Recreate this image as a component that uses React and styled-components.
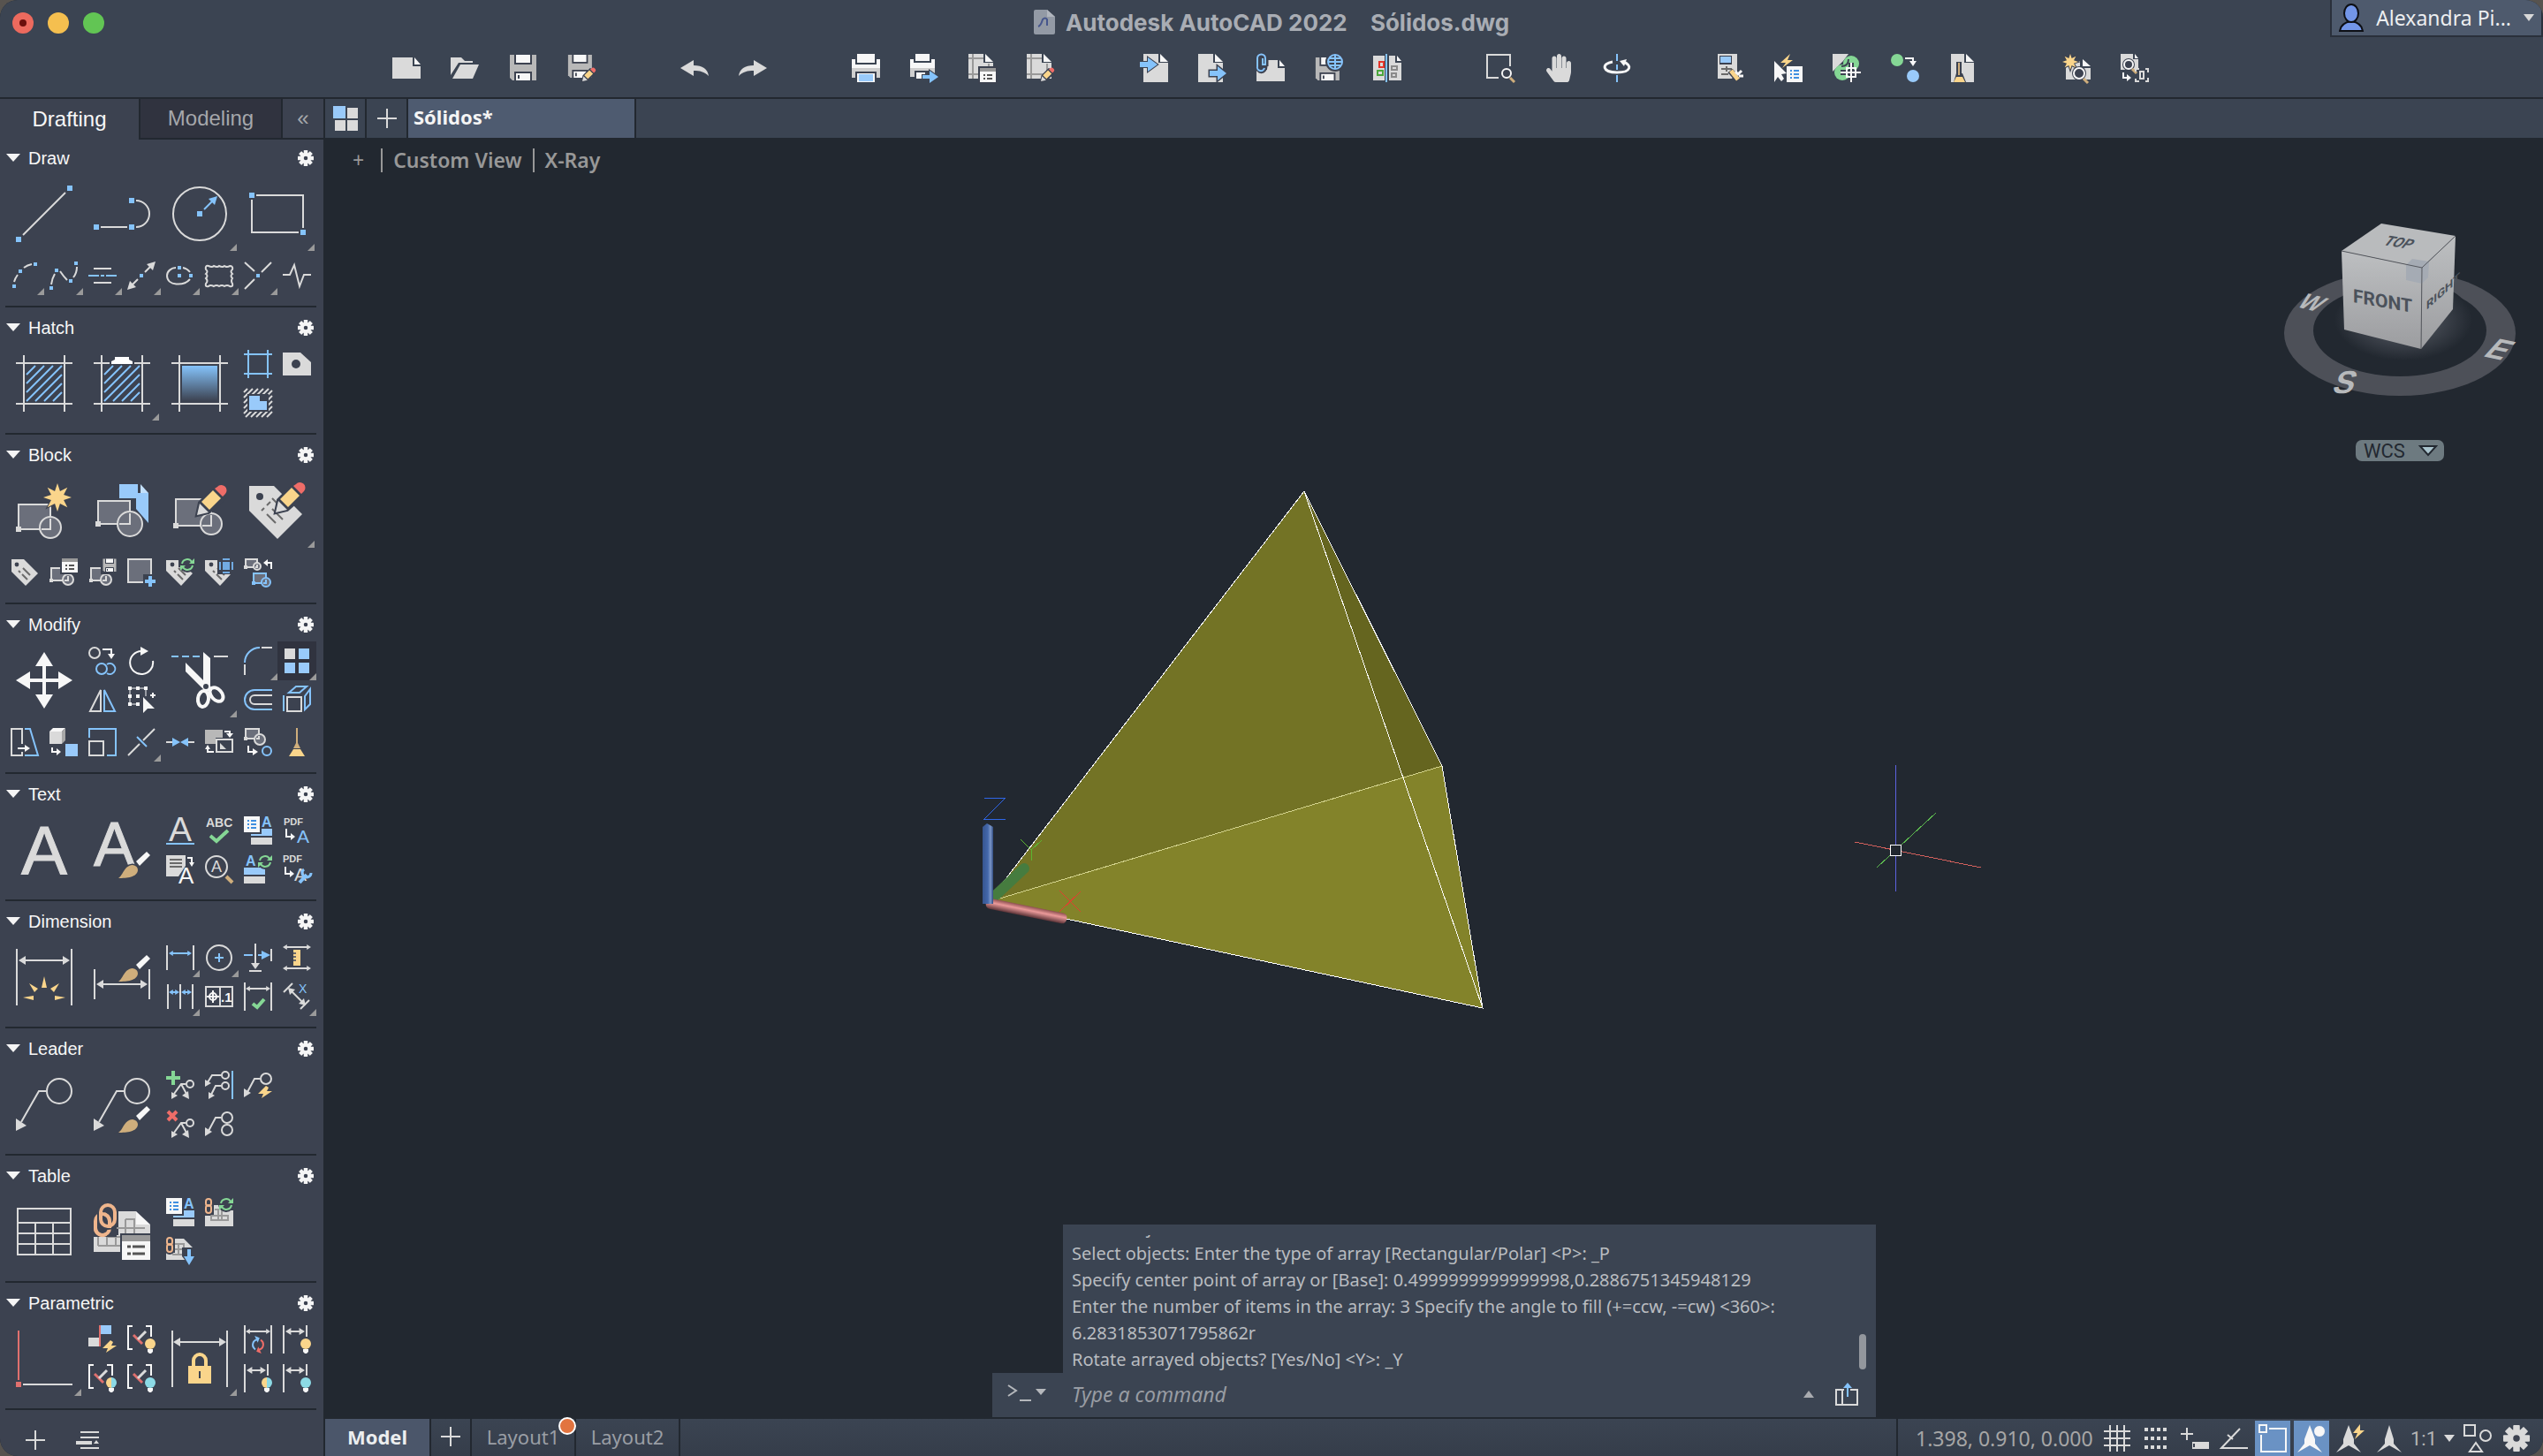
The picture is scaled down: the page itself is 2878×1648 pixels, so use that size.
import styled, { createGlobalStyle } from "styled-components";
import { FaHandPaper } from "react-icons/fa";

const G = "#dadada";
const B = "#85c3fb";
const LB = "#99cafa";
const Y = "#fad58b";
const R = "#e0706e";
const GR = "#85d795";
const TAN = "#cfae7c";
const W = "#f7f7f7";
const BG = "#3c4250";
const FILL = "#6b6f7b";
const DK = "#6a6a6a";
const CY = "#8cdae5";
const OR = "#efb58c";

const GlobalStyle = createGlobalStyle`
  * {
    box-sizing: border-box;
  }

  body {
    margin: 0;
    background: #57534f;
    font-family: "Noto Sans", "Open Sans", sans-serif;
  }

  button {
    border: 0;
    padding: 0;
    margin: 0;
    background: none;
    color: inherit;
    font: inherit;
    cursor: pointer;
  }

  svg {
    display: block;
    flex: none;
    overflow: visible;
  }
`;

const Window = styled.div`
  height: 100vh;
  display: flex;
  flex-direction: column;
  overflow: hidden;
  border-radius: 20px;
  background: #222830;
  color: #f5f5f5;
`;

const Header = styled.header`
  background: #3b4452;
  border-bottom: 2px solid #222830;
`;

const TitleRow = styled.div`
  height: 50px;
  display: grid;
  grid-template-columns: 1fr auto 1fr;
  align-items: start;
`;

const Lights = styled.div`
  display: flex;
  gap: 16px;
  padding: 14px;
`;

const Light = styled.button`
  width: 24px;
  height: 24px;
  border-radius: 50%;
  background: ${(p) => p.$color};
  display: grid;
  place-items: center;
`;

const LightDot = styled.span`
  width: 8px;
  height: 8px;
  border-radius: 50%;
  background: #6b0f0c;
`;

const Title = styled.h1`
  display: flex;
  align-items: center;
  gap: 12px;
  height: 50px;
  margin: 0;
  font-family: Inter, sans-serif;
  font-size: 26px;
  font-weight: 700;
  color: #a9adb4;
`;

const FileName = styled.span`
  margin-left: 20px;
`;

const UserButton = styled.button`
  justify-self: end;
  display: flex;
  align-items: center;
  gap: 14px;
  height: 42px;
  padding: 0 8px;
  background: #4e5a6d;
  border: solid #2a303b;
  border-width: 0 2px 2px;
  font-size: 23px;
  color: #eceef0;
`;

const Toolbar = styled.div`
  display: flex;
  justify-content: center;
  gap: 96px;
  padding: 11px 2px 17px 0;
`;

const ToolGroup = styled.div`
  display: flex;
  gap: 34px;
`;

const Tool = styled.button`
  width: 32px;
  height: 32px;
  color: ${G};
`;

const Main = styled.div`
  flex: 1;
  min-height: 0;
  display: flex;
`;

const Palette = styled.aside`
  width: 368px;
  flex: none;
  display: flex;
  flex-direction: column;
  background: ${BG};
  border-right: 2px solid #222830;
  font-family: "Liberation Sans", Arial, sans-serif;
`;

const PaletteTabs = styled.div`
  display: flex;
  height: 46px;
  margin-bottom: -2px;
`;

const PaletteTab = styled.button`
  width: ${(p) => p.$width}px;
  font-size: 24px;
  color: ${(p) => (p.$active ? "#f7f7f7" : "#a5a7ab")};
  background: ${(p) => (p.$dark ? "#30333f" : BG)};
  border: solid #222830;
  border-width: ${(p) => (p.$active ? "0" : "0 0 2px 2px")};
`;

const Section = styled.section`
  margin: 0 8px 0 6px;
  padding-bottom: 12px;
  border-bottom: 2px solid #222830;
`;

const SectionHead = styled.div`
  display: flex;
  align-items: center;
  height: 42px;
  padding: 3px 3px 0 1px;
`;

const SectionTitle = styled.h2`
  flex: 1;
  margin: 0 0 0 9px;
  font-size: 20px;
  line-height: 24px;
  font-weight: 400;
  color: #f7f7f7;
`;

const CellGrid = styled.div`
  display: grid;
  grid-template-columns: repeat(8, 44px);
  grid-auto-rows: 44px;

  & + & {
    margin-top: 4px;
  }
`;

const Cell = styled.button`
  position: relative;
  display: grid;
  place-items: center;
  background: ${(p) => (p.$selected ? "#30333f" : "none")};
  ${(p) => p.$large && "grid-column-end: span 2; grid-row-end: span 2;"}
  ${(p) => p.$col && `grid-column-start: ${p.$col};`}

  &::after {
    content: "";
    display: ${(p) => (p.$flyout ? "block" : "none")};
    position: absolute;
    right: ${(p) => (p.$large ? 2 : 0)}px;
    bottom: ${(p) => (p.$large ? 2 : 0)}px;
    border: solid transparent;
    border-width: 0 0 8px 8px;
    border-bottom-color: #9a9a9a;
  }
`;

const PaletteFoot = styled.div`
  display: flex;
  align-items: flex-start;
  gap: 35px;
  flex: 1;
  min-height: 46px;
  padding: 23px 29px 0;
`;

const Workspace = styled.main`
  flex: 1;
  min-width: 0;
  display: flex;
  flex-direction: column;
`;

const FileTabs = styled.div`
  display: flex;
  flex: none;
  height: 44px;
  background: #3b4452;
`;

const FileTabButton = styled.button`
  display: grid;
  place-items: center;
  width: 47px;
  border-right: 2px solid #222830;
`;

const FileTab = styled.button`
  width: 258px;
  padding: 0 6px 4px;
  text-align: left;
  font-size: 22px;
  font-weight: 700;
  background: #4e5b70;
  border-right: 2px solid #222830;
`;

const Viewport = styled.div`
  position: relative;
  flex: 1;
  min-height: 0;
  display: flex;
  flex-direction: column;
  justify-content: space-between;
`;

const Canvas = styled.svg`
  position: absolute;
  inset: 0;
  width: 100%;
  height: 100%;
  overflow: hidden;
`;

const Overlay = styled.div`
  position: relative;
  display: flex;
  justify-content: space-between;
  align-items: flex-start;
`;

const ViewControls = styled.div`
  display: flex;
  align-items: center;
  gap: 12px;
  padding: 10px 0 0 24px;
  font-size: 23px;
  font-weight: 600;
  line-height: 30px;
  color: #989898;
`;

const Bar = styled.span`
  width: 2px;
  height: 27px;
  background: #989898;
`;

const PlusLabel = styled.button`
  padding: 0 7px;
  font-weight: 400;
`;

const Navigation = styled.div`
  display: flex;
  flex-direction: column;
  align-items: center;
  gap: 48px;
  padding: 74px 6px 0 0;
`;

const WcsButton = styled.button`
  display: flex;
  align-items: center;
  justify-content: space-between;
  width: 100px;
  height: 24px;
  padding: 0 9px;
  border-radius: 7px;
  background: #6d7a80;
  color: #222830;
  font-family: Roboto, sans-serif;
  font-size: 22px;
`;

const CommandLine = styled.div`
  position: relative;
  align-self: center;
  width: 1000px;
  max-width: 100%;
  margin-bottom: 2px;
`;

const History = styled.div`
  height: 168px;
  margin-left: 80px;
  padding: 12px 11px 0 10px;
  display: flex;
  justify-content: space-between;
  align-items: flex-end;
  background: #3b4452;
`;

const Lines = styled.div`
  height: 156px;
  display: flex;
  flex-direction: column;
  justify-content: flex-end;
  overflow: hidden;
  font-size: 20px;
  line-height: 30px;
  color: #b9bcc0;
  white-space: nowrap;
`;

const Thumb = styled.div`
  width: 8px;
  height: 40px;
  margin-bottom: 4px;
  border-radius: 4px;
  background: #93979d;
`;

const Prompt = styled.label`
  display: flex;
  align-items: center;
  height: 50px;
  padding: 0 20px 2px 16px;
  background: #3b4452;
`;

const CommandInput = styled.input`
  flex: 1;
  min-width: 0;
  margin-left: 28px;
  padding: 0;
  border: 0;
  outline: 0;
  background: none;
  color: #d0d2d5;
  font: italic 23px "Noto Sans", sans-serif;

  &::placeholder {
    color: #989ca3;
    opacity: 1;
  }
`;

const PromptTools = styled.span`
  display: flex;
  align-items: center;
  gap: 24px;
`;

const StatusBar = styled.footer`
  display: flex;
  flex: none;
  height: 42px;
  background: linear-gradient(#3b4452, #353d4a);
`;

const LayoutTab = styled.button`
  position: relative;
  width: ${(p) => p.$width}px;
  display: grid;
  place-items: center;
  padding-bottom: 2px;
  font-size: 22px;
  font-weight: ${(p) => (p.$active ? 700 : 400)};
  color: ${(p) => (p.$active ? "#eceeef" : "#9a9ea5")};
  background: ${(p) => (p.$active ? "#4b566a" : "none")};
  border-right: 2px solid #222830;
`;

const Badge = styled.span`
  position: absolute;
  top: -2px;
  right: -2px;
  width: 20px;
  height: 20px;
  border-radius: 50%;
  border: 2px solid #fff;
  background: #e27440;
`;

const StatusTools = styled.div`
  display: flex;
  align-items: center;
  gap: 4px;
  margin-left: auto;
  padding: 2px 10px 0 20px;
  border-left: 2px solid #222830;
`;

const Coordinates = styled.output`
  width: 204px;
  font-size: 23px;
  color: #a6a6a6;
`;

const StatusButton = styled.button`
  width: 40px;
  height: 40px;
  display: grid;
  place-items: center;
  background: ${(p) => (p.$on ? "#6a92c4" : "none")};
`;

const ScaleButton = styled.button`
  display: flex;
  align-items: center;
  gap: 8px;
  width: 52px;
  font-family: Roboto, sans-serif;
  font-size: 22px;
  color: #b5b5b5;
`;

/* drawing primitives */

const Ln = ({ d, c = G, w = 2, f = "none" }) => (
  <path d={d} stroke={c} strokeWidth={w} fill={f} />
);
const Fl = ({ d, c = G }) => <path d={d} fill={c} />;
const Sq = ({ x, y, s = 6, c = B }) => (
  <rect x={x - s / 2} y={y - s / 2} width={s} height={s} fill={c} />
);
const Ci = ({ x, y, r, c = G, f = "none", w = 2 }) => (
  <circle cx={x} cy={y} r={r} stroke={c} strokeWidth={w} fill={f} />
);
const Bx = ({ x, y, w, h, c = G }) => (
  <rect x={x} y={y} width={w} height={h} fill={c} />
);
const Tx = ({ x, y, s, c = G, b = 400, children }) => (
  <text
    x={x}
    y={y}
    fontSize={s}
    fontWeight={b}
    fill={c}
    fontFamily="Liberation Sans, Arial, sans-serif"
  >
    {children}
  </text>
);

const Pencil = ({ x, y, k = 1 }) => (
  <g transform={`translate(${x} ${y}) scale(${k})`}>
    <path d="M0 0L3-14L20-31L32-26L30-18L13-3Z" stroke={BG} strokeWidth="4" fill={BG} />
    <path d="M0 0L3-13L13-3Z" fill={G} />
    <path d="M5-15L18-28L27-19L14-6Z" fill={Y} />
    <path d="M20-30L23-32A5.5 5.5 0 0 1 32-24L29-21Z" fill="#ef6d68" />
  </g>
);

const Brush = ({ y = 0 }) => (
  <g transform={`translate(0 ${y})`}>
    <path d="M48 45L60 34L64 38L52 50Z" fill={W} stroke={BG} strokeWidth="3" paintOrder="stroke" />
    <path
      d="M28 64C34 60 34 50 44 49Q50 50 50 55C49 63 38 64 28 64Z"
      fill={TAN}
      stroke={BG}
      strokeWidth="3"
      paintOrder="stroke"
    />
  </g>
);

const Recycle = ({ x, y, r = 6, c = GR, c2 = c }) => (
  <g transform={`translate(${x} ${y})`}>
    <circle r={r + 3} fill={BG} />
    <path d={`M${-r}-1A${r} ${r} 0 0 1 ${r - 1}-3`} stroke={c} strokeWidth="2" fill="none" />
    <path d={`M${r} 1A${r} ${r} 0 0 1 ${1 - r} 3`} stroke={c2} strokeWidth="2" fill="none" />
    <path d={`M${r + 2}-7V-1H${r - 4}Z`} fill={c} />
    <path d={`M${-r - 2} 7V1H${4 - r}Z`} fill={c2} />
  </g>
);

const Bulb = ({ c = Y, c2 = c }) => (
  <>
    <path d="M26 15A6 6 0 0 0 26 27Z" fill={c} />
    <path d="M26 15A6 6 0 0 1 26 27Z" fill={c2} />
    <path d="M23 27H29V30L27 32H25L23 30Z" fill={W} />
  </>
);

const Bolt = ({ x, y }) => (
  <path
    transform={`translate(${x} ${y})`}
    d="M1-7L-8 2H-2L-4 7L8-1H2L4-5Z"
    fill={Y}
    stroke={BG}
    paintOrder="stroke"
    strokeWidth="2"
  />
);

const Star = ({ x, y, r }) => {
  const pts = Array.from({ length: 16 }, (_, i) => {
    const a = (i * Math.PI) / 8 - Math.PI / 2;
    const q = i % 2 ? r * 0.48 : r;
    return `${x + q * Math.cos(a)},${y + q * Math.sin(a)}`;
  });
  return <polygon points={pts.join(" ")} fill={Y} stroke={BG} strokeWidth="2" paintOrder="stroke" />;
};

const DimArrow = ({ a, b, y, c = G, h = 4 }) => (
  <>
    <path d={`M${a + 3} ${y}H${b - 3}`} stroke={c} strokeWidth="2" />
    <path d={`M${a} ${y}l${h * 1.6}-${h}v${h * 2}zM${b} ${y}l-${h * 1.6}-${h}v${h * 2}z`} fill={c} />
  </>
);

const Block = ({ x, y, w, h, r, c = G, s = 4, cx = x + w, cy = y + h - 1 }) => (
  <>
    <rect x={x} y={y} width={w} height={h} stroke={c} strokeWidth="2" fill={FILL} />
    <circle cx={cx} cy={cy} r={r} stroke={c} strokeWidth="2" fill={FILL} />
    <path d={`M${cx - r + 2} ${y + h}H${x + w}V${cy - r + 2}`} stroke={c} strokeWidth="2" fill="none" />
    <Sq x={x} y={y + h} s={s} c={c} />
  </>
);

const Props = ({ x, y, w = 18, h = 16 }) => (
  <g transform={`translate(${x} ${y})`}>
    <rect x="-2" y="-2" width={w + 4} height={h + 4} fill={BG} />
    <rect width={w} height={h} fill={W} />
    <rect width={w} height={h / 4} fill="#999" />
    {w > 20 ? (
      <path d="M6 13H10M12 13H26M6 21H10M12 21H26" stroke="#555" strokeWidth="3" />
    ) : (
      <path d="M4 8H6M8 8H14M4 12H6M8 12H14" stroke="#555" strokeWidth="2" />
    )}
  </g>
);

const Floppy = ({ k = 1, x = 0, y = 0 }) => (
  <g transform={`translate(${x} ${y}) scale(${k})`}>
    <path d="M1 1H31V30H4L1 27Z" fill="#b8b8b8" />
    <path d="M6 1H26V12H6Z" fill={BG} />
    <path d="M8 1H24V10H8ZM8 22H24V30H8Z" fill={W} />
    <path d="M7 30V21H25V30" stroke={BG} strokeWidth="2" fill="none" />
    <path d="M11 24V28" stroke={BG} strokeWidth="2" />
  </g>
);

const TagShape = ({ cut }) => (
  <>
    <path
      d={cut ? "M0 2H14V10H22L30 17L17 31L0 14Z" : "M1 1H15L31 17L17 31L1 15Z"}
      fill={G}
    />
    <circle cx="7" cy="7" r="2.4" fill={BG} />
    <path d="M9 14L11 16M13 18L19 24M14 11L22 19" stroke={DK} strokeWidth="2" />
  </>
);

const Chain = () => (
  <g fill="none">
    <path d="M9 2H19A7 7 0 0 1 26 9V38H0V12Z" fill={BG} />
    <rect x="2" y="12" width="16" height="24" rx="8" stroke={OR} strokeWidth="4" />
    <rect x="8" y="2" width="16" height="24" rx="8" stroke={BG} strokeWidth="8" />
    <rect x="8" y="2" width="16" height="24" rx="8" stroke={OR} strokeWidth="4" />
    <path d="M10 12A8 8 0 0 1 18 20V28" stroke={OR} strokeWidth="4" />
    <path d="M2 20V28A8 8 0 0 0 14 35" stroke={OR} strokeWidth="4" />
  </g>
);

const SmallChain = () => (
  <g fill="none">
    <rect x="1" y="1" width="6" height="16" rx="3" stroke={BG} strokeWidth="6" fill={BG} />
    <rect x="1" y="1" width="6" height="8" rx="3" stroke={OR} strokeWidth="2" />
    <rect x="1" y="8" width="6" height="9" rx="3" stroke={OR} strokeWidth="2" />
  </g>
);

const Brackets = () => (
  <>
    <Ln d="M6 1H1V27H6M21 1H27V13" c={W} />
    <Ln d="M7 11L17 21" c={R} w={3} />
    <Ln d="M12 16L21 7" w={3} />
  </>
);

const DimFrame = () => (
  <>
    <Ln d="M1 0V32M27 0V13" />
    <DimArrow a={3} b={25} y={7} />
  </>
);

const ListA = () => (
  <>
    <Tx x={20} y={12} s={16} c={B} b={700}>A</Tx>
    <Fl d="M20 14H32V22H8V20H20Z" c={LB} />
    <Bx x={8} y={24} w={24} h={8} />
    <Bx x={0} y={0} w={18} h={18} c={W} />
    <Ln d="M4 5H6M8 5H14M4 9H6M8 9H14M4 13H6M8 13H14" c="#3f8fe0" />
  </>
);

const Magnifier = ({ x, y, r = 6 }) => (
  <>
    <circle cx={x} cy={y} r={r + 2} fill={BG} />
    <circle cx={x} cy={y} r={r} stroke={W} strokeWidth="2" fill="none" />
    <path d={`M${x + r - 1} ${y + r}L${x + r + 4} ${y + r + 5}`} stroke={TAN} strokeWidth="3" />
  </>
);

const Hatching = () => (
  <Ln
    d="M12 22L22 12M12 32L32 12M12 42L42 12M12 52L52 12M22 52L52 22M32 52L52 32M42 52L52 42"
    c={B}
  />
);

const Page = ({ x = 0, w = 28 }) => (
  <>
    <path d={`M${x} 0H${x + w - 11}V10H${x + w}V32H${x}Z`} fill={G} />
    <path d={`M${x + w - 9} 0L${x + w} 9H${x + w - 9}Z`} fill={W} />
  </>
);

const PlotPage = () => (
  <>
    <path d="M0 0H17V10H28V28H0Z" fill={G} />
    <path d="M0 5H17M5 0V28M0 23H28M23 11V28" stroke="#999" strokeWidth="2" />
    <path d="M19 0L28 9H19Z" fill={W} />
  </>
);

const hatchTicks =
  "M0 4L4 0M0 10L10 0M0 16L16 0M0 22L22 0M0 28L28 0M2 32L32 2M8 32L32 8M14 32L32 14M20 32L32 20M26 32L32 26";

const icons = {
  line: <><Sq x={3} y={61} /><Sq x={61} y={3} /><Ln d="M8 56L56 8" /></>,
  polyline: <><Sq x={3} y={47} /><Sq x={43} y={47} /><Sq x={43} y={17} /><Ln d="M8 47H38M48 17A15 15 0 0 1 48 47" /></>,
  circle: <><Ci x={32} y={32} r={30} /><Sq x={32} y={32} /><Ln d="M37 27L47 17" c={B} /><Fl d="M52 12L42 15L49 22Z" c={B} /></>,
  rect: <><Sq x={3} y={11} /><Sq x={61} y={53} /><Ln d="M8 11H61V48M3 16V53H56" /></>,
  arc: <><Sq x={4} y={28} s={4} /><Sq x={11} y={11} s={4} /><Sq x={28} y={3} s={4} /><Ln d="M4 23Q5 19 8 15M15 7Q19 4 24 3" /></>,
  spline: <><Sq x={2} y={30} s={4} /><Sq x={8} y={10} s={4} /><Sq x={24} y={22} s={4} /><Sq x={30} y={2} s={4} /><Ln d="M2 26Q3 19 6 14M12 11Q16 17 20 21M27 18Q31 13 31 6" /></>,
  mline: <><Ln d="M6 8H26M6 24H26" /><Ln d="M0 16H12M14 16H18M20 16H32" c={B} /></>,
  ray: <><Sq x={16} y={16} s={4} /><Ln d="M20 12L27 5M12 20L5 27" /><Fl d="M32 0L22 3L29 10ZM0 32L3 22L10 29Z" /></>,
  ellipse: <><Sq x={15} y={7} s={4} /><Sq x={15} y={16} s={4} /><Sq x={28} y={16} s={4} /><Ln d="M19 7Q24 8 27 12M27 20C20 28 1 28 1 16C1 11 6 7 11 7" /></>,
  cloud: <Ln d="M4 5q4 2 6 0q4 2 6 0q4 2 6 0q3 2 6 0q4 0 3 4q-3 2 0 5q-3 2 0 5q-2 3 0 6q1 4-3 3q-3-2-6 0q-3-2-6 0q-3-2-6 0q-4-2-6 0q-4 1-3-3q3-3 0-6q3-3 0-5q3-3 0-5q-1-5 3-4z" />,
  xline: <><Ln d="M1 1L12 11M31 1L20 12M12 20L1 31" /><Sq x={16} y={16} s={4} /></>,
  breakline: <Ln d="M0 15H8L13 4L19 28L24 15H32" />,

  hatch: <><Ln d="M9 0V64M55 0V64M0 9H64M0 55H64" /><Hatching /></>,
  hatchEdit: <><Ln d="M9 0V64M55 0V64M0 9H18M46 9H64M0 55H64" /><Hatching /><Fl d="M20 10V7L24 5V2H40V5L44 7V10Z" c="#fff" /></>,
  gradient: (
    <>
      <defs>
        <linearGradient id="fade" x2="0" y2="1">
          <stop stopColor={B} />
          <stop offset="1" stopColor={BG} />
        </linearGradient>
      </defs>
      <Bx x={12} y={12} w={40} h={40} c="url(#fade)" />
      <Ln d="M9 0V64M55 0V64M0 9H64M0 55H64" />
    </>
  ),
  boundary: <Ln d="M5 0V32M27 0V32M0 5H32M0 27H32" c={B} />,
  wipeout: <><Fl d="M0 3H20L32 14V29H0Z" /><circle cx="15" cy="16" r="5" fill={BG} /></>,
  region: <><Ln d={hatchTicks} /><Bx x={4} y={6} w={24} h={20} c={BG} /><Fl d="M6 8H18V14H26V24H6Z" c={LB} /></>,

  blockNew: <><Block x={3} y={25} w={36} h={28} r={12} s={6} cy={51} /><Star x={47} y={17} r={16} /></>,
  blockInsert: <><Fl d="M29 2H50V12H62V46L48 30V18H29Z" c={LB} /><Fl d="M53 2L62 12H53Z" c="#c3e0fb" /><Block x={5} y={21} w={36} h={26} r={14} s={6} cy={47} /></>,
  blockEdit: <><Block x={5} y={19} w={40} h={30} r={12} s={6} cy={47} /><Pencil x={29} y={37} /></>,
  tagEdit: <><Fl d="M0 4H28L60 36L32 64L0 32Z" /><circle cx="12" cy="16" r="4" fill={BG} /><Ln d="M14 32L17 29M20 26L24 22M20 36L30 46M26 30L38 42M26 18L34 26" c={DK} /><Pencil x={30} y={34} /></>,
  tag: <TagShape />,
  blockProps: <><Block x={2} y={11} w={19} h={14} r={6} /><Props x={14} y={0} /></>,
  blockSave: <><Block x={3} y={11} w={17} h={14} r={6} /><Bx x={14} y={0} w={18} h={18} c={BG} /><Floppy k={0.5} x={16} y={0} /></>,
  blockAdd: <><rect x="1" y="1" width="26" height="26" fill={FILL} stroke={G} strokeWidth="2" /><Bx x={18} y={18} w={14} h={14} c={BG} /><Ln d="M26 20V32M20 26H32" c={B} w={4} /></>,
  tagSync: <><TagShape cut /><Recycle x={24} y={7} /></>,
  tagSelect: <><TagShape cut /><Bx x={14} y={0} w={18} h={18} c={BG} /><Bx x={20} y={4} w={8} h={9} c="#72abe2" /><Ln d="M20 1H28M20 16H28M17 4V13M31 4V13" c="#72abe2" /></>,
  blockSwap: <><Block x={2} y={1} w={13} h={9} r={4} /><Ln d="M31 12V5H26" c={W} /><Fl d="M22 5L27 1V9Z" c={W} /><Block x={11} y={17} w={14} h={11} r={5} c={B} /></>,

  move: <><Ln d="M32 12V52M12 32H52" c={W} w={4} /><Fl d="M32 0L42 16H22ZM32 64L42 48H22ZM0 32L16 22V42ZM64 32L48 22V42Z" c={W} /></>,
  copy: <><Ci x={7} y={7} r={6} /><Ln d="M16 3H26V9" c={W} /><Fl d="M22 8H30L26 14Z" c={W} /><Ci x={15} y={25} r={6} c={B} /><Ln d="M21 20A6 6 0 1 1 21 30" c={B} /></>,
  rotate: <><Ln d="M29 16A13 13 0 1 1 16 5" c={W} /><Fl d="M15 0L24 5L15 10Z" c={W} /></>,
  mirror: <><Ln d="M14 5V29H2Z" /><Ln d="M18 5V29H30Z" c={B} /></>,
  stretchSel: (
    <>
      <Ln d="M3 3H21V12M3 3V21H14" c={W} w={1} />
      {[[3, 3], [12, 3], [21, 3], [3, 12], [12, 12], [3, 21], [12, 21]].map(([x, y]) => (
        <Sq key={`${x}-${y}`} x={x} y={y} s={4} c={W} />
      ))}
      <Ln d="M29 8V14M26 11H32" c={W} />
      <Fl d="M18 13V31L23 26L31 26Z" c={W} />
    </>
  ),
  trim: (
    <>
      <Ln d="M0 5H8M12 5H20M24 5H32" c={B} />
      <Ln d="M48 5H64" />
      <Fl d="M36 0L44 7V38L46 44H38L16 22V12L36 32Z" c={W} />
      <ellipse cx="36" cy="53" rx="6" ry="9" stroke={W} strokeWidth="4" fill="none" transform="rotate(8 36 53)" />
      <ellipse cx="51" cy="48" rx="6" ry="9" stroke={W} strokeWidth="4" fill="none" transform="rotate(-42 51 48)" />
      <circle cx="39" cy="39" r="3" fill={BG} />
    </>
  ),
  fillet: <><Ln d="M1 18A17 17 0 0 1 18 1" c={B} /><Ln d="M20 1H32M1 20V32" /></>,
  array: <><Bx x={2} y={2} w={12} h={12} /><Bx x={18} y={2} w={12} h={12} c={LB} /><Bx x={2} y={18} w={12} h={12} c={LB} /><Bx x={18} y={18} w={12} h={12} c={LB} /></>,
  offset: <><Ln d="M32 5H12A11 11 0 0 0 12 27H32" c={B} /><Ln d="M32 11H12A5 5 0 0 0 12 21H32" /></>,
  extrude: <><Ln d="M5 13H21V29H5Z" /><Ln d="M1 11V29M7 8L15 1H27L19 8ZM25 12L31 4V21L25 27Z" c={B} /></>,
  stretch: <><Ln d="M13 18V1H1V31H13V27" /><Ln d="M16 1H22L31 31H16" c={B} /><Ln d="M8 23H18" c={W} /><Fl d="M22 23L16 19V27Z" c={W} /></>,
  flatten: <><Fl d="M0 4H14V18H0Z" /><Fl d="M0 4L4 0H18L14 4Z" c={W} /><Fl d="M14 4L18 0V14L14 18Z" c="#a8a8a8" /><Bx x={18} y={18} w={14} h={14} c={LB} /><Ln d="M3 22V27H9" c={W} /><Fl d="M13 27L8 23V31Z" c={W} /></>,
  scale: <><Ln d="M1 11V1H31V31H21" c={B} /><Ln d="M1 15H17V31H1Z" /></>,
  breakAt: <><Ln d="M1 31L14 18M18 14L31 1" /><Ln d="M11 10L22 21" c={B} /></>,
  join: <><Ln d="M0 16H8M24 16H32" /><Fl d="M7 11L16 16L7 21ZM25 11L16 16L25 21Z" c={B} /></>,
  space: <><Fl d="M0 2H20V11H12V18H0Z" c="#b8b8b8" /><Ln d="M22 4H28V7" c={W} /><Fl d="M24 6H32L28 11Z" c={W} /><Ln d="M13 13H31V27H13Z" /><Ln d="M10 27H3V24" c={W} /><Fl d="M0 24H6L3 19Z" c={W} /><Fl d="M17 17L24 24H17Z" /></>,
  blockCopy: <><Block x={2} y={1} w={15} h={11} r={6} cx={18} cy={13} /><Ln d="M5 20V27H11" c={W} /><Fl d="M16 27L10 23V31Z" c={W} /><Ci x={26} y={26} r={5} c={B} /></>,
  purge: <><Ln d="M16 0V18" c={TAN} /><Fl d="M15 17H17L20 23H12Z" c={TAN} /><Fl d="M12 24H20L25 32H7Z" c={Y} /></>,

  mtext: <text x="6" y="60" fontSize="78" fill={G} stroke={G} fontFamily="Liberation Sans, sans-serif">A</text>,
  textStyle: <><text x="0" y="50" fontSize="70" fill={G} stroke={G} fontFamily="Liberation Sans, sans-serif">A</text><Brush /></>,
  text: <><Tx x={3} y={28} s={39}>A</Tx><Ln d="M0 31H32" c={B} /></>,
  spell: <><Tx x={1} y={12} s={14} b={700}>ABC</Tx><Ln d="M6 22L13 28L26 16" c={GR} w={4} /></>,
  listA: <ListA />,
  pdfText: <><Tx x={1} y={10} s={11} b={700}>PDF</Tx><Ln d="M4 14V23H9" c={W} /><Fl d="M14 23L9 19V27Z" c={W} /><Tx x={16} y={30} s={21} c={B}>A</Tx></>,
  fieldText: <><Fl d="M0 0H22V12L14 24H0Z" /><Ln d="M4 5H18M4 9H18M4 13H18" c={DK} /><Ln d="M24 3H29V9" c={W} /><Fl d="M26 8H32L29 13Z" c={W} /><Tx x={14} y={32} s={26} c={W}>A</Tx></>,
  findText: <><Ci x={13} y={13} r={12} /><Tx x={7} y={19} s={18}>A</Tx><Ln d="M24 24L31 31" c={TAN} w={4} /></>,
  updateField: <><Tx x={2} y={12} s={16} c={B} b={700}>A</Tx><Bx x={0} y={14} w={24} h={8} c={LB} /><Bx x={0} y={24} w={24} h={8} /><Recycle x={24} y={7} /></>,
  pdfTools: <><Tx x={0} y={8} s={11} b={700}>PDF</Tx><Ln d="M3 13V21H8" c={W} /><Fl d="M13 21L8 17V25Z" c={W} /><Tx x={13} y={29} s={21}>A</Tx><Ln d="M19 31L27 22" c={B} w={4} /><Ln d="M24 16A5 5 0 1 0 32 20" c={B} w={3} /></>,

  dim: <><Ln d="M1 0V64M63 0V64" /><DimArrow a={3} b={61} y={13} h={5} /><Fl d="M32 31L35 44H29ZM15 39L25 45L21 49ZM49 39L39 45L43 49ZM8 55L20 53V58ZM56 55L44 53V58Z" c={Y} /></>,
  dimStyle: <><Ln d="M1 23V57M63 23V57" /><DimArrow a={3} b={61} y={40} h={5} /><Brush y={-27} /></>,
  dimLinear: <><Ln d="M1 2V30M31 2V30" /><DimArrow a={3} b={29} y={11} c={B} h={3} /></>,
  dimRadius: <><Ci x={16} y={16} r={14} /><Ln d="M16 11V21M11 16H21" c={B} /></>,
  dimOrdinate: <><Ln d="M13 0V24M6 31H20M31 6V20" /><Fl d="M8 22H18L13 29Z" /><Ln d="M0 13H10M16 13H22" c={B} /><Fl d="M30 13L20 8V18Z" c={B} /></>,
  dimSpace: <><DimArrow a={0} b={32} y={4} h={3} /><DimArrow a={0} b={32} y={28} h={3} /><Bx x={12} y={7} w={8} h={18} c={Y} /><Ln d="M12 11H15M12 15H15M12 19H15" c={DK} /></>,
  dimContinue: <><Ln d="M2 2V30M16 2V30M30 2V30" /><DimArrow a={3} b={15} y={11} c={B} h={3} /><DimArrow a={17} b={29} y={11} c={B} h={3} /></>,
  tolerance: <><Ln d="M1 5H31V27H1ZM17 5V27" /><Ci x={9} y={16} r={4} c={W} /><Ln d="M9 9V23M2 16H16" c={W} /><Tx x={18} y={22} s={15} c={W} b={700}>.1</Tx></>,
  inspect: <><Ln d="M1 0V32M31 0V32" /><DimArrow a={2} b={30} y={7} h={3} /><Ln d="M10 24L15 28L23 19" c={GR} w={4} /></>,
  dimAngle: <><Ln d="M1 11L11 1M20 30L30 20" /><Ln d="M9 9L23 23" /><Fl d="M6 6L14 8L8 14ZM26 26L18 24L24 18Z" /><Tx x={18} y={12} s={14} c={B}>X</Tx></>,

  leader: <><Ci x={49} y={17} r={14} /><Ln d="M34 17H26L6 52" /><Fl d="M0 62V48L12 56Z" /></>,
  leaderStyle: <><Ci x={49} y={17} r={14} /><Ln d="M34 17H26L6 52" /><Fl d="M0 62V48L12 56Z" /><Brush /></>,
  leaderAdd: <><Ln d="M8 0V16M0 8H16" c={GR} w={4} /><Ci x={27} y={15} r={4} /><Ln d="M22 15H17L9 26M17 15L23 26" /><Fl d="M6 32V24L13 28ZM26 32L18 28L25 23Z" /></>,
  leaderAlign: <><Ci x={23} y={5} r={4} /><Ci x={23} y={17} r={4} /><Ln d="M18 5H8L3 13M18 17H12L7 27" /><Fl d="M0 18V10L7 14ZM4 32V24L11 28Z" /><Ln d="M31 0V32" c={B} /></>,
  leaderAuto: <><Ci x={25} y={9} r={6} /><Ln d="M18 9H12L4 24" /><Fl d="M0 30V20L8 25Z" /><Bolt x={24} y={24} /></>,
  leaderRemove: <><Ln d="M2 2L12 12M12 2L2 12" c="#ef6d68" w={4} /><Ci x={27} y={15} r={4} /><Ln d="M22 15H17L9 26M17 15L23 26" /><Fl d="M6 32V24L13 28ZM26 32L18 28L25 23Z" /></>,
  leaderCollect: <><Ci x={25} y={9} r={6} /><Ci x={25} y={23} r={6} /><Ln d="M18 9H12L4 24" /><Fl d="M0 30V20L8 25Z" /></>,

  table: <Ln d="M2 6H62V58H2ZM2 22H62M2 34H62M2 46H62M22 22V58M42 22V58" />,
  dataLink: (
    <>
      <Fl d="M28 9H48V24H64V55H0V36H28Z" />
      <Fl d="M48 9L64 24H48Z" c={W} />
      <Ln d="M36 18H46V28H58M25 28H46M36 18V38M46 28V38M15 38H58M25 28V48M5 48H36M5 38V48M15 38V48" c="#999" />
      <Chain />
      <Props x={32} y={36} w={32} h={28} />
    </>
  ),
  linkSync: <><Fl d="M10 8H18V14H32V32H0V20H10Z" /><Ln d="M11 13H15V25M7 20H26V25H7ZM19 14V25" c="#999" /><SmallChain /><Recycle x={24} y={7} /></>,
  linkDown: <><Fl d="M10 2H20L32 14V20H22V26H0V18H10Z" /><Ln d="M10 8H20V20H7M7 14H20M14 8V20" c="#999" /><SmallChain /><Fl d="M18 12H32V20L26 32L18 22Z" c={BG} /><Fl d="M24 14H28V22H32L26 32L20 22H24Z" c={B} /></>,

  coincident: <><Ln d="M3 0V56" c={R} /><Sq x={3} y={61} c={R} /><Ln d="M8 61H64" /></>,
  autoConstrain: <><Bx x={0} y={14} w={12} h={10} /><Bx x={14} y={0} w={12} h={10} c={LB} /><Ln d="M13 0V24" c={R} /><Bolt x={24} y={24} /></>,
  geoShow: <><Brackets /><Bulb /></>,
  geoShowAll: <><Brackets /><Bulb c={Y} c2={CY} /></>,
  geoHide: <><Brackets /><Bulb c={CY} /></>,
  dimLock: <><Ln d="M1 0V64M63 0V64" /><DimArrow a={2} b={62} y={13} h={5} /><Bx x={19} y={40} w={26} h={20} c={Y} /><Ln d="M25 41V34A7 7 0 0 1 39 34V41" c={Y} w={4} /><Ln d="M32 46V54" c={BG} /></>,
  dimConvert: <><Ln d="M1 0V32M31 0V32" /><DimArrow a={2} b={30} y={7} h={3} /><g transform="rotate(-70 16 22)"><Recycle x={16} y={22} c={B} c2="#ef6d68" /></g></>,
  dimShow: <><DimFrame /><Bulb /></>,
  dimShowAll: <><DimFrame /><Bulb c={Y} c2={CY} /></>,
  dimHide: <><DimFrame /><Bulb c={CY} /></>,

  newFile: <><Fl d="M0 4H23V14H32V28H0Z" /><Fl d="M25 4L32 12H25Z" c={W} /></>,
  open: <><Fl d="M0 4H12L16 8H25V10H9L0 24Z" /><Fl d="M11 12H32L25 28H2Z" /></>,
  save: <Floppy />,
  saveAs: <><Floppy k={0.9} /><Pencil x={17} y={31} k={0.45} /></>,
  undo: <Fl d="M0 16L15 7V13C25 13 31 17 32 25C27 20 22 19 15 19V25Z" />,
  redo: <Fl d="M32 16L17 7V13C7 13 1 17 0 25C5 20 10 19 17 19V25Z" />,
  print: <><Bx x={6} y={0} w={20} h={10} c={W} /><Fl d="M0 6H4V12H28V6H32V16H0Z" c={W} /><Bx x={0} y={16} w={32} h={11} c="#cfcfcf" /><Bx x={4} y={20} w={24} h={8} c={BG} /><Bx x={6} y={22} w={20} h={10} c={W} /><Bx x={8} y={23} w={16} h={8} c={LB} /></>,
  printTo: <><Bx x={6} y={0} w={16} h={8} c={W} /><Fl d="M0 6H4V10H24V6H28V16H0Z" c={W} /><Bx x={0} y={16} w={28} h={10} c="#cfcfcf" /><Bx x={5} y={19} w={18} h={10} c={BG} /><Bx x={7} y={21} w={10} h={7} c={W} /><path d="M14 24H22V19L32 26L22 33V28H14Z" fill={B} stroke={BG} strokeWidth="2" paintOrder="stroke" /></>,
  pageSetup: <><PlotPage /><Props x={13} y={16} /></>,
  plotEdit: <><PlotPage /><Pencil x={16} y={31} k={0.45} /></>,
  importFile: <><Page x={4} /><path d="M0 9H9V4L20 12L9 20V15H0Z" fill={B} stroke={BG} strokeWidth="2" paintOrder="stroke" /></>,
  exportFile: <><Page /><path d="M13 19H22V14L32 22L22 30V25H13Z" fill={B} stroke={BG} strokeWidth="3" paintOrder="stroke" /></>,
  attach: <><Fl d="M0 18H12V7H24V16H32V31H0Z" /><Fl d="M26 7L32 14H26Z" c={W} /><Ln d="M10 8V14A4 5 0 0 1 1 14V6A5 5 0 0 1 11 6V14" c={BG} w={5} /><Ln d="M7 5V12H10V5A4 4 0 0 0 1 5V14A4 4 0 0 0 9 16" c={B} /></>,
  saveWeb: <><Floppy k={0.9} y={3} /><circle cx="23" cy="9" r="11" fill={BG} /><Ci x={23} y={9} r={8} c={B} f={BG} /><Ln d="M23 1V17M15 9H31M17 5H29M17 13H29" c={B} /></>,
  compare: <><Bx x={0} y={2} w={13} h={28} /><Fl d="M18 2H25V10H32V30H18Z" /><Fl d="M27 2L32 8H27Z" c={W} /><Ln d="M7 9H12V15H7Z" c="#e5352b" /><Ln d="M5 19H11V24H5Z" c="#4aa53c" /><Ln d="M21 14H27V18H21ZM21 22H26V26H21Z" c="#8a8a8a" /><Ln d="M15 0V32" c={B} /></>,
  zoomWindow: <><Ln d="M14 27H1V1H27V14" /><Magnifier x={23} y={22} r={5} /></>,
  orbit: <><Ln d="M16 0V8M16 12V18M16 24V32" c={B} /><Ln d="M11 9C-2 11-1 21 16 21C33 21 33 12 23 9" c={W} w={3} /><Fl d="M19 8L27 6L24 14Z" c={W} /></>,
  properties: <><Fl d="M2 0H24V20L18 28H2Z" /><Bx x={4} y={2} w={14} h={10} c={BG} /><Bx x={5} y={3} w={12} h={7} c={LB} /><Ln d="M6 17H18M6 23H14M12 14V20" c={DK} /><Ln d="M16 19L26 30" c={BG} w={7} /><Ln d="M17 19L25 29" c={Y} w={5} /><Ln d="M22 20L25 23L29 19M26 25L31 25" c={W} w={3} /></>,
  quickSelect: <><Fl d="M0 8V32L4 26L8 31L11 28L8 23L14 22Z" c={W} /><Bx x={14} y={14} w={18} h={18} c={W} /><Ln d="M18 19H20M22 19H28M18 23H20M22 23H28M18 27H20M22 27H28" c="#3f8fe0" /><path d="M18 0L7 10H13L9 16L21 7H15Z" fill={Y} /></>,
  geolocate: <><Fl d="M0 0H18L12 8L0 20Z" /><circle cx="21" cy="11" r="9" fill={GR} /><circle cx="11" cy="21" r="9" fill={GR} /><Ln d="M10 14Q18 14 18 6" c={BG} /><Ln d="M21 10V32M9 21H32" c={BG} w={6} /><Ln d="M21 10V32M9 21H32" c={W} /><Ln d="M16 16H26V26H16Z" c={W} /></>,
  match: <><circle cx="7" cy="7" r="7" fill={GR} /><circle cx="25" cy="25" r="7" fill={LB} /><Ln d="M16 5H25V9" c={W} /><Fl d="M21 8H29L25 14Z" c={W} /></>,
  cleanFile: <><Page x={2} w={26} /><Ln d="M11 9V24" c={BG} w={6} /><Fl d="M5 32L8 22H15L19 32Z" c={BG} /><Ln d="M11 10V24" c={TAN} /><Fl d="M8 26H15L18 32H5Z" c={Y} /></>,
  newView: <><Fl d="M4 8H20V16H32V29H4Z" /><Fl d="M23 6L32 14H23Z" c={W} /><Star x={9} y={9} r={9} /><Magnifier x={19} y={22} r={6} /></>,
  viewFit: <><Fl d="M0 0H14V6H20V18H0Z" /><Fl d="M16 0L20 5H16Z" c={W} /><Magnifier x={9} y={12} r={5} /><Ln d="M3 21V27H8" c={W} /><Fl d="M12 27L7 23V31Z" c={W} /><Ln d="M22 20H26V28H22ZM17 20V17H21M28 17H31V21M31 27V31H28M21 31H17V28" /></>,
};

const Icon = ({ name, size = 32 }) => (
  <svg width={size} height={size} viewBox={`0 0 ${size} ${size}`} aria-hidden="true">
    {icons[name]}
  </svg>
);

const Gear = ({ size, color = "#f5f5f5", hole }) => (
  <svg width={size} height={size} viewBox="-16 -16 32 32" aria-hidden="true">
    <g fill={color}>
      {[0, 45, 90, 135].map((a) => (
        <rect key={a} x="-4" y="-16" width="8" height="32" rx="1" transform={`rotate(${a})`} />
      ))}
      <circle r="11" />
    </g>
    <circle r="4" fill={hole} />
  </svg>
);

const Plus = () => (
  <svg width="22" height="22" viewBox="0 0 22 22" aria-hidden="true">
    <path d="M11 0V22M0 11H22" stroke={G} strokeWidth="2" />
  </svg>
);

const toolGroups = [
  ["newFile", "open", "save", "saveAs"],
  ["undo", "redo"],
  ["print", "printTo", "pageSetup", "plotEdit"],
  ["importFile", "exportFile", "attach", "saveWeb", "compare"],
  ["zoomWindow", "pan", "orbit"],
  ["properties", "quickSelect", "geolocate", "match", "cleanFile"],
  ["newView", "viewFit"],
];

// "L:" marks a double-size tool, a trailing "+" a flyout, "@n" a start column
const sections = [
  {
    title: "Draw",
    grids: [
      ["L:line", "L:polyline", "L:circle+", "L:rect+"],
      ["arc+", "spline+", "mline+", "ray+", "ellipse+", "cloud+", "xline+", "breakline"],
    ],
  },
  { title: "Hatch", grids: [["L:hatch", "L:hatchEdit+", "L:gradient", "boundary", "wipeout", "region"]] },
  {
    title: "Block",
    grids: [
      ["L:blockNew", "L:blockInsert", "L:blockEdit", "L:tagEdit+"],
      ["tag", "blockProps", "blockSave", "blockAdd", "tagSync", "tagSelect", "blockSwap"],
    ],
  },
  {
    title: "Modify",
    grids: [
      ["L:move", "copy", "rotate", "L:trim+", "fillet+", "array+", "mirror", "stretchSel", "offset", "extrude"],
      ["stretch", "flatten", "scale", "breakAt+", "join", "space", "blockCopy", "purge"],
    ],
  },
  {
    title: "Text",
    grids: [
      ["L:mtext", "L:textStyle", "text", "spell", "listA", "pdfText", "fieldText", "findText", "updateField", "pdfTools"],
    ],
  },
  {
    title: "Dimension",
    grids: [
      [
        "L:dim", "L:dimStyle", "dimLinear+", "dimRadius+", "dimOrdinate", "dimSpace",
        "dimContinue+", "tolerance", "inspect", "dimAngle+",
      ],
    ],
  },
  {
    title: "Leader",
    grids: [
      ["L:leader", "L:leaderStyle", "leaderAdd", "leaderAlign", "leaderAuto", "leaderRemove@5", "leaderCollect"],
    ],
  },
  { title: "Table", grids: [["L:table", "L:dataLink", "listA", "linkSync", "linkDown@5"]] },
  {
    title: "Parametric",
    grids: [
      [
        "L:coincident+", "autoConstrain", "geoShow", "L:dimLock+", "dimConvert", "dimShow",
        "geoShowAll", "geoHide", "dimShowAll", "dimHide",
      ],
    ],
  },
];

const parseTool = (spec) => {
  const large = spec.startsWith("L:");
  const [, name, flyout, , col] = spec.replace("L:", "").match(/^(\w+)(\+?)(@(\d))?$/);
  return { large, name, flyout: flyout === "+", col };
};

const PaletteSection = ({ title, grids }) => (
  <Section>
    <SectionHead>
      <svg width="16" height="9" viewBox="0 0 16 9" aria-hidden="true">
        <path d="M0 0H16L8 9Z" fill="#f5f5f5" />
      </svg>
      <SectionTitle>{title}</SectionTitle>
      <button aria-label={`${title} settings`}>
        <Gear size={18} hole={BG} />
      </button>
    </SectionHead>
    {grids.map((grid, i) => (
      <CellGrid key={i}>
        {grid.map(parseTool).map((t) => (
          <Cell
            key={t.name}
            aria-label={t.name}
            $large={t.large}
            $flyout={t.flyout}
            $col={t.col}
            $selected={t.name === "array"}
          >
            <Icon name={t.name} size={t.large ? 64 : 32} />
          </Cell>
        ))}
      </CellGrid>
    ))}
  </Section>
);

const Drawing = () => (
  <Canvas viewBox="368 156 2510 1450" preserveAspectRatio="xMidYMid slice" aria-hidden="true">
    <defs>
      <linearGradient id="axisZ">
        <stop stopColor="#37558f" />
        <stop offset=".5" stopColor="#4468ab" />
        <stop offset=".75" stopColor="#7c97c8" />
        <stop offset="1" stopColor="#2f4a80" />
      </linearGradient>
      <linearGradient id="axisX" x1="0" x2="0" y1="0" y2="1">
        <stop stopColor="#8d4f50" />
        <stop offset=".4" stopColor="#eb9a9a" />
        <stop offset="1" stopColor="#5d3438" />
      </linearGradient>
    </defs>
    <path d="M1118 1021L1476 556L1632 867Z" fill="#737325" />
    <path d="M1476 556L1632 867L1588 880Z" fill="#65651f" />
    <path d="M1118 1021L1632 867L1678 1141Z" fill="#83832a" />
    <path d="M1118 1021L1632 867" stroke="#d3d38c" shapeRendering="crispEdges" />
    <path
      d="M1118 1021L1476 556L1678 1141ZM1476 556L1632 867L1678 1141"
      stroke="#fff"
      shapeRendering="crispEdges"
      fill="none"
    />
    <path d="M1126 1014L1159 983" stroke="#467c3f" strokeWidth="12" strokeLinecap="round" />
    <g transform="rotate(11.5 1117 1022)">
      <rect x="1116" y="1016" width="93" height="12" rx="5" fill="url(#axisX)" />
    </g>
    <path d="M1112 936L1117 932L1124 936V1023H1112Z" fill="url(#axisZ)" />
    <g fill="none" shapeRendering="crispEdges">
      <path d="M1114 903H1138L1114 927H1138" stroke="#2f66e8" />
      <path d="M1155 950L1167 962L1179 951M1167 962V974" stroke="#5cb531" />
      <path d="M1199 1008L1223 1032M1223 1009L1199 1032" stroke="#e0402f" />
      <path d="M2099 953L2242 982" stroke="#d2605c" />
      <path d="M2124 982L2191 920" stroke="#5cb84f" />
      <path d="M2145 866V1009" stroke="#5d62e0" />
      <rect x="2139" y="956" width="12" height="12" fill="#222830" stroke="#fff" />
    </g>
  </Canvas>
);

const ViewCube = () => (
  <svg width="312" height="220" viewBox="0 0 312 220" role="img" aria-label="View cube">
    <defs>
      <linearGradient id="front" x2="0" y2="1">
        <stop stopColor="#bdbfc1" />
        <stop offset="1" stopColor="#9c9da0" />
      </linearGradient>
      <radialGradient id="glow">
        <stop offset=".5" stopColor="#41464f" />
        <stop offset="1" stopColor="#222830" />
      </radialGradient>
    </defs>
    <ellipse cx="156" cy="147" rx="131" ry="71" fill="#4d5058" />
    <ellipse cx="156" cy="144" rx="98" ry="52" fill="#222830" />
    <ellipse cx="160" cy="132" rx="78" ry="46" fill="url(#glow)" />
    <path d="M90 54L135 23L219 37L181 73Z" fill="#b9bbbd" />
    <path d="M90 54L181 73L180 165L93 143Z" fill="url(#front)" />
    <path d="M181 73L219 37L216 120L180 165Z" fill="url(#front)" />
    <path d="M163 70L170 63L189 66L188 84L181 91L163 87Z" fill="#a5abb4" />
    <path d="M90 54L181 73L219 37M181 73L180 165" stroke="#55585e" fill="none" />
    <g fontFamily="Roboto, sans-serif" fontWeight="700" fill="#4b525b">
      <text transform="translate(103 112) skewY(10)" fontSize="21">FRONT</text>
      <text transform="translate(186 121) skewY(-42)" fontSize="13">RIGHT</text>
      <text transform="translate(136 47) rotate(9) skewX(-30)" fontSize="16">TOP</text>
    </g>
    <g fontFamily="Liberation Sans, sans-serif" fontWeight="700" fill="#b7b9bb">
      <text transform="translate(38 117) rotate(14) skewX(-30)" fontSize="26">W</text>
      <text transform="translate(249 173) rotate(12) skewX(-30)" fontSize="34">E</text>
      <text transform="translate(78 215) skewX(-20)" fontSize="36">S</text>
    </g>
  </svg>
);

const history = [
  "Select objects:",
  "Select objects: Enter the type of array [Rectangular/Polar] <P>: _P",
  "Specify center point of array or [Base]: 0.4999999999999998,0.2886751345948129",
  "Enter the number of items in the array: 3 Specify the angle to fill (+=ccw, -=cw) <360>:",
  "6.2831853071795862r",
  "Rotate arrayed objects? [Yes/No] <Y>: _Y",
];

const statusIcons = {
  grid: <Ln d="M8 1V31M16 1V31M24 1V31M1 8H31M1 16H31M1 24H31" />,
  snap: (
    <>
      {[6, 16, 26].map((y) =>
        [5, 12, 19, 26].map((x) => <Sq key={`${x}-${y}`} x={x} y={y} s={4} c={G} />)
      )}
    </>
  ),
  dynamic: <><Ln d="M7 4V18M0 11H14" /><Bx x={13} y={20} w={19} h={8} /><Ln d="M15 22V26" c={BG} /></>,
  polar: <Ln d="M23 5L2 27H32M9 12L15 17" />,
  osnap: <Ln d="M1 1H9V9H1ZM12 5H31V31H3V12" c={W} />,
  annoShow: <><Fl d="M14 1L20 17V22L28 32L14 24L0 32L8 22V17Z" c={W} /><circle cx="25" cy="8" r="6.5" fill={W} stroke="#6a92c4" /></>,
  annoAuto: <><Fl d="M14 1L20 17V22L28 32L14 24L0 32L8 22V17Z" /><Fl d="M27 0L19 10H24L21 17L32 7H27Z" c={Y} /></>,
  anno: <Fl d="M16 1L21 17V22L30 32L16 24L2 32L11 22V17Z" />,
  isolate: <><Ln d="M1 1H13V13H1ZM14 21L21 31H7Z" /><Ci x={25} y={13} r={6} /></>,
};

const StatusIcon = ({ name }) => (
  <svg width="32" height="32" viewBox="0 0 32 32" aria-hidden="true">
    {statusIcons[name]}
  </svg>
);

const App = () => (
  <Window>
    <GlobalStyle />
    <Header>
      <TitleRow>
        <Lights>
          <Light aria-label="Close" $color="#ec6a5e"><LightDot /></Light>
          <Light aria-label="Minimize" $color="#f5bf4f" />
          <Light aria-label="Zoom" $color="#62c554" />
        </Lights>
        <Title>
          <svg width="24" height="28" viewBox="0 0 24 28" aria-hidden="true">
            <path d="M2 0H15L24 8V26Q24 28 22 28H2Q0 28 0 26V2Q0 0 2 0Z" fill="#939aa5" />
            <path d="M15 0L24 8H15Z" fill="#b0b5bd" />
            <path d="M5 19Q8 18 10 11Q13 8 15 11V18" stroke="#46568c" strokeWidth="2" fill="none" />
          </svg>
          <span>
            Autodesk AutoCAD 2022 <FileName>Sólidos.dwg</FileName>
          </span>
        </Title>
        <UserButton>
          <svg width="28" height="32" viewBox="0 0 28 32" aria-hidden="true">
            <path d="M1 31Q2 22 14 20Q26 22 27 31Z" fill="#7396e8" stroke="#0d0f14" strokeWidth="2" />
            <ellipse cx="14" cy="11" rx="8" ry="10" fill="#7396e8" stroke="#0d0f14" strokeWidth="2" />
          </svg>
          Alexandra Pi...
          <svg width="12" height="8" viewBox="0 0 12 8" aria-hidden="true">
            <path d="M0 0H12L6 8Z" fill="#d8d8d8" />
          </svg>
        </UserButton>
      </TitleRow>
      <Toolbar>
        {toolGroups.map((group) => (
          <ToolGroup key={group[0]}>
            {group.map((name) => (
              <Tool key={name} aria-label={name}>
                {name === "pan" ? <FaHandPaper size={32} /> : <Icon name={name} />}
              </Tool>
            ))}
          </ToolGroup>
        ))}
      </Toolbar>
    </Header>

    <Main>
      <Palette>
        <PaletteTabs>
          <PaletteTab $width={157} $active>Drafting</PaletteTab>
          <PaletteTab $width={161} $dark>Modeling</PaletteTab>
          <PaletteTab $width={48}>«</PaletteTab>
        </PaletteTabs>
        {sections.map((s) => (
          <PaletteSection key={s.title} {...s} />
        ))}
        <PaletteFoot>
          <button aria-label="Add"><Plus /></button>
          <button aria-label="Menu">
            <svg width="28" height="22" viewBox="0 0 28 22" aria-hidden="true">
              <path d="M5 2H26M5 8H26M5 20H26" stroke={G} strokeWidth="2" />
              <path d="M0 12H18V16H0ZM20 15L23 11L26 15Z" fill={G} />
            </svg>
          </button>
        </PaletteFoot>
      </Palette>

      <Workspace>
        <FileTabs>
          <FileTabButton aria-label="Start">
            <svg width="30" height="28" viewBox="0 0 30 28" aria-hidden="true">
              <Bx x={1} y={0} w={14} h={14} c={LB} />
              <Bx x={17} y={2} w={12} h={12} />
              <Bx x={3} y={16} w={12} h={12} />
              <Bx x={17} y={16} w={12} h={12} />
            </svg>
          </FileTabButton>
          <FileTabButton aria-label="New drawing"><Plus /></FileTabButton>
          <FileTab>Sólidos*</FileTab>
        </FileTabs>

        <Viewport>
          <Drawing />
          <Overlay>
            <ViewControls>
              <PlusLabel>+</PlusLabel>
              <Bar />
              <button>Custom View</button>
              <Bar />
              <button>X-Ray</button>
            </ViewControls>
            <Navigation>
              <ViewCube />
              <WcsButton>
                WCS
                <svg width="18" height="10" viewBox="0 0 18 10" aria-hidden="true">
                  <path d="M0 0H18L9 10Z" fill="#a9c3cc" stroke="#222830" strokeWidth="2" />
                </svg>
              </WcsButton>
            </Navigation>
          </Overlay>

          <CommandLine>
            <History>
              <Lines>
                {history.map((line) => (
                  <span key={line}>{line}</span>
                ))}
              </Lines>
              <Thumb />
            </History>
            <Prompt>
              <svg width="46" height="24" viewBox="0 0 46 24" aria-hidden="true">
                <path d="M2 2L11 8L2 14" stroke="#b5b8bc" strokeWidth="2" fill="none" />
                <path d="M15 19H28" stroke="#b5b8bc" strokeWidth="2" />
                <path d="M33 6H45L39 13Z" fill="#b5b8bc" />
              </svg>
              <CommandInput aria-label="Command" placeholder="Type a command" />
              <PromptTools>
                <svg width="12" height="8" viewBox="0 0 12 8" aria-hidden="true">
                  <path d="M0 8H12L6 0Z" fill="#a9abaf" />
                </svg>
                <svg width="26" height="26" viewBox="0 0 26 26" aria-hidden="true">
                  <path d="M10 8H1V25H25V8H17M8 8V25" stroke={G} strokeWidth="2" fill="none" />
                  <path d="M14 16V4" stroke={B} strokeWidth="2" />
                  <path d="M14 0L19 6H9Z" fill={B} />
                </svg>
              </PromptTools>
            </Prompt>
          </CommandLine>
        </Viewport>

        <StatusBar>
          <LayoutTab $width={120} $active>Model</LayoutTab>
          <LayoutTab $width={46} aria-label="New layout"><Plus /></LayoutTab>
          <LayoutTab $width={118}>Layout1<Badge /></LayoutTab>
          <LayoutTab $width={118}>Layout2</LayoutTab>
          <StatusTools>
            <Coordinates>1.398, 0.910, 0.000</Coordinates>
            {["grid", "snap", "dynamic", "polar", "osnap", "annoShow", "annoAuto", "anno"].map((name) => (
              <StatusButton key={name} aria-label={name} $on={name === "osnap" || name === "annoShow"}>
                <StatusIcon name={name} />
              </StatusButton>
            ))}
            <ScaleButton>
              1:1
              <svg width="12" height="8" viewBox="0 0 12 8" aria-hidden="true">
                <path d="M0 0H12L6 8Z" fill={G} />
              </svg>
            </ScaleButton>
            <StatusButton aria-label="Isolate objects"><StatusIcon name="isolate" /></StatusButton>
            <StatusButton aria-label="Settings"><Gear size={30} color={G} hole={BG} /></StatusButton>
          </StatusTools>
        </StatusBar>
      </Workspace>
    </Main>
  </Window>
);

export default App;
